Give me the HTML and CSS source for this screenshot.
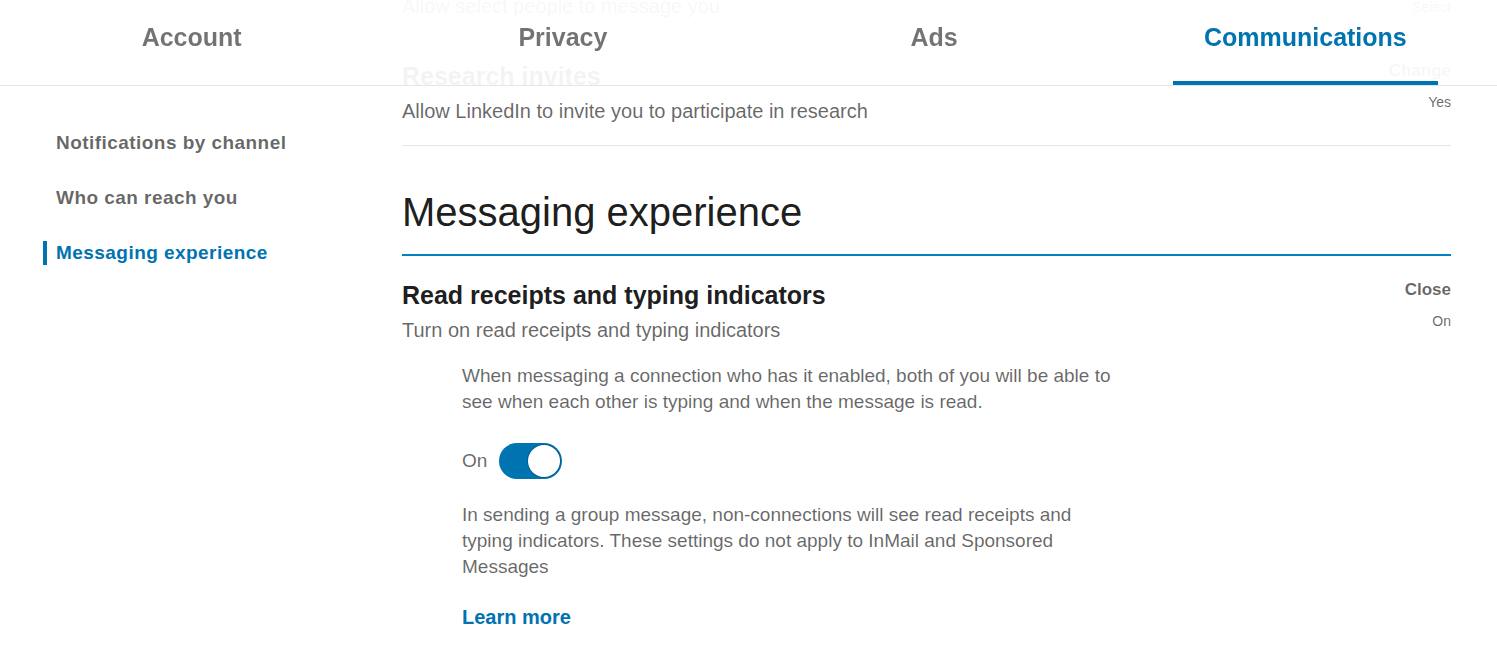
FILE: index.html
```html
<!DOCTYPE html>
<html lang="en">
<head>
<meta charset="utf-8">
<title>Settings - Communications</title>
<link rel="stylesheet" href="styles.css">
</head>
<body>
<header class="tabs">
  <nav class="tabs-row">
    <a class="tab"><span class="tab-label">Account</span></a>
    <a class="tab"><span class="tab-label">Privacy</span></a>
    <a class="tab"><span class="tab-label">Ads</span></a>
    <a class="tab"><span class="tab-label tab-label-active">Communications</span></a>
  </nav>
</header>

<div class="page">
  <aside class="sidebar">
    <a class="side-link">Notifications by channel</a>
    <a class="side-link">Who can reach you</a>
    <a class="side-link side-link-active">Messaging experience</a>
  </aside>

  <main class="main">
    <div class="item item-prev">
      <div class="item-text">
        <p class="item-desc">Allow select people to message you</p>
      </div>
      <div class="item-side item-side-prev">
        <span class="item-status">Select</span>
      </div>
    </div>

    <div class="item">
      <div class="item-text">
        <h3 class="item-title">Research invites</h3>
        <p class="item-desc">Allow LinkedIn to invite you to participate in research</p>
      </div>
      <div class="item-side">
        <a class="item-action">Change</a>
        <span class="item-status">Yes</span>
      </div>
    </div>

    <section class="section">
      <h2 class="section-title">Messaging experience</h2>

      <div class="item item-open">
        <div class="item-head">
          <div class="item-text">
            <h3 class="item-title">Read receipts and typing indicators</h3>
            <p class="item-desc">Turn on read receipts and typing indicators</p>
          </div>
          <div class="item-side">
            <a class="item-action">Close</a>
            <span class="item-status">On</span>
          </div>
        </div>

        <div class="item-body">
          <p class="body-text">When messaging a connection who has it enabled, both of you will be able to see when each other is typing and when the message is read.</p>
          <div class="toggle-row">
            <span class="toggle-label">On</span>
            <span class="toggle"><span class="toggle-knob"></span></span>
          </div>
          <p class="body-text body-text-2">In sending a group message, non-connections will see read receipts and typing indicators. These settings do not apply to InMail and Sponsored Messages</p>
          <a class="learn-more">Learn more</a>
        </div>
      </div>
    </section>
  </main>
</div>
</body>
</html>
```

FILE: styles.css
```css
* { box-sizing: border-box; }

html, body {
  margin: 0;
  padding: 0;
  background: #ffffff;
  font-family: "Liberation Sans", Arial, sans-serif;
  color: rgba(0, 0, 0, 0.6);
  overflow: hidden;
}

p, h2, h3 { margin: 0; }
a { text-decoration: none; cursor: pointer; }

/* Header tabs overlay */
.tabs {
  position: fixed;
  top: 0;
  left: 0;
  right: 0;
  height: 86px;
  background: rgba(255, 255, 255, 0.95);
  border-bottom: 1px solid #e6e6e6;
  z-index: 10;
}

.tabs-row {
  display: grid;
  grid-template-columns: repeat(4, 1fr);
  padding: 0 6px;
  height: 85px;
}

.tab {
  display: flex;
  justify-content: center;
}

.tab-label {
  display: block;
  height: 85px;
  padding: 22px 31px 0;
  font-size: 25px;
  line-height: 30px;
  font-weight: 700;
  color: rgba(0, 0, 0, 0.55);
  border-bottom: 4px solid transparent;
}

.tab-label-active {
  color: #0073b1;
  border-bottom-color: #0073b1;
}

/* Page layout */
.page {
  display: grid;
  grid-template-columns: 402px 1fr;
  padding-right: 46px;
}

.sidebar {
  display: flex;
  flex-direction: column;
  gap: 31px;
  padding: 131px 0 0 56px;
}

.side-link {
  display: block;
  margin-left: -13px;
  padding-left: 9px;
  border-left: 4px solid transparent;
  font-size: 19px;
  line-height: 24px;
  font-weight: 700;
  color: rgba(0, 0, 0, 0.6);
  letter-spacing: 0.45px;
}

.side-link-active {
  color: #0073b1;
  border-left-color: #0073b1;
}

.main {
  display: flex;
  flex-direction: column;
}

/* Items */
.item {
  display: flex;
  justify-content: space-between;
  padding: 20px 0 22px;
  border-bottom: 1px solid #e6e6e6;
}

.item-prev {
  margin-top: -26px;
}

.item-side-prev {
  margin-top: -8px;
}

.item-title {
  font-size: 25px;
  line-height: 30px;
  font-weight: 700;
  color: rgba(0, 0, 0, 0.9);
}

.item-desc {
  margin-top: 8px;
  font-size: 20px;
  line-height: 24px;
  color: rgba(0, 0, 0, 0.6);
}

.item-prev .item-desc { margin-top: 0; }

.item-side {
  display: flex;
  flex-direction: column;
  align-items: flex-end;
}

.item-action {
  font-size: 17px;
  line-height: 20px;
  font-weight: 700;
  color: rgba(0, 0, 0, 0.6);
}

.item-status {
  margin-top: 12px;
  font-size: 14px;
  line-height: 18px;
  color: rgba(0, 0, 0, 0.6);
}

/* Section */
.section-title {
  margin-top: 42px;
  padding-bottom: 18px;
  border-bottom: 2px solid #0084bf;
  font-size: 40px;
  line-height: 48px;
  font-weight: 400;
  color: rgba(0, 0, 0, 0.9);
}

.item-open {
  display: block;
  padding-top: 24px;
  border-bottom: none;
}

.item-head {
  display: flex;
  justify-content: space-between;
}

.item-body {
  padding-left: 60px;
  width: 717px;
  display: flex;
  flex-direction: column;
  align-items: flex-start;
}

.body-text {
  margin-top: 21px;
  font-size: 19px;
  line-height: 26px;
  color: rgba(0, 0, 0, 0.6);
}

.body-text-2 { margin-top: 23px; }

.toggle-row {
  display: flex;
  align-items: center;
  gap: 12px;
  margin-top: 28px;
}

.toggle-label {
  font-size: 19px;
  line-height: 24px;
  color: rgba(0, 0, 0, 0.6);
}

.toggle {
  display: flex;
  justify-content: flex-end;
  align-items: center;
  width: 63px;
  height: 36px;
  padding: 2px;
  border-radius: 18px;
  background: #0073b1;
}

.toggle-knob {
  display: block;
  width: 32px;
  height: 32px;
  border-radius: 50%;
  background: #ffffff;
  box-shadow: 0 0 0 1px #005e93;
}

.learn-more {
  margin-top: 25px;
  font-size: 20px;
  line-height: 24px;
  font-weight: 700;
  color: #0073b1;
}
```
